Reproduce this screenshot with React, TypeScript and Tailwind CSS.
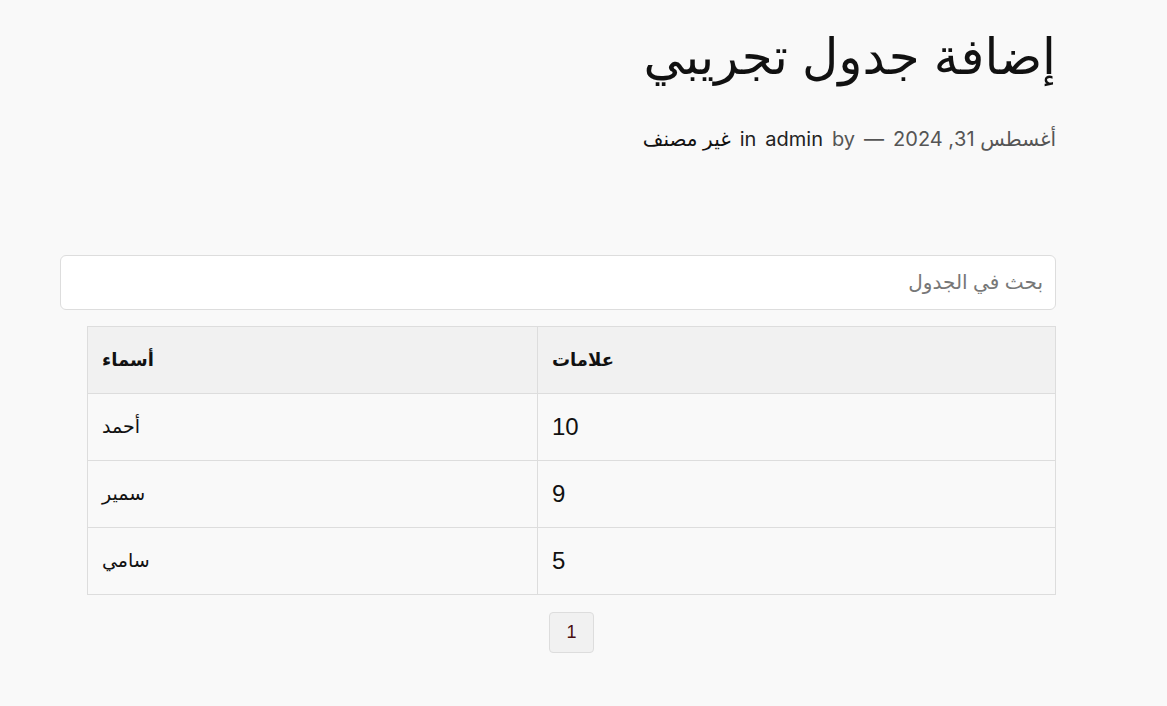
import React from "react";

const rows = [
  { name: "أحمد", mark: "10" },
  { name: "سمير", mark: "9" },
  { name: "سامي", mark: "5" },
];

export default function App() {
  return (
    <div className="min-h-screen w-full bg-[#f9f9f9] font-['Inter','DejaVu_Sans',sans-serif] text-[#111]">
      <div className="ml-[60px] w-[996px] pt-[20px]">
        <h1 dir="rtl" className="text-[50px] leading-[72px] font-normal text-[#111]">
          إضافة جدول تجريبي
        </h1>
        <div dir="rtl" className="mt-[33px] flex items-center gap-[9px] text-[20px] leading-[28px]">
          <span className="text-[#555]">أغسطس 31, 2024</span>
          <span className="text-[#555]">—</span>
          <span className="text-[#555]">by</span>
          <span className="text-[#222]">admin</span>
          <span className="text-[#222]">in</span>
          <span className="text-[#111]">غير مصنف</span>
        </div>

        <div className="mt-[102px]">
          <input
            dir="rtl"
            placeholder="بحث في الجدول"
            className="h-[55px] w-full rounded-[6px] border border-[#dddddd] bg-white px-[12px] text-[20px] text-[#333] outline-none placeholder:text-[#777] font-['Liberation_Sans','DejaVu_Sans',sans-serif]"
          />
        </div>

        <div className="mt-[16px] flex justify-end">
          <table className="w-[969px] border-collapse font-['Liberation_Sans','DejaVu_Sans',sans-serif]">
            <thead>
              <tr className="h-[67px] bg-[#f1f1f1]">
                <th className="w-[450px] border border-[#dddddd] px-[14px] text-left text-[18px] font-bold">أسماء</th>
                <th className="border border-[#dddddd] px-[14px] text-left text-[18px] font-bold">علامات</th>
              </tr>
            </thead>
            <tbody>
              {rows.map((r) => (
                <tr key={r.name} className="h-[67px] bg-[#f9f9f9]">
                  <td className="border border-[#dddddd] px-[14px] text-left text-[19px]">{r.name}</td>
                  <td className="border border-[#dddddd] px-[14px] text-left text-[24px]">{r.mark}</td>
                </tr>
              ))}
            </tbody>
          </table>
        </div>

        <div className="mt-[17px] flex justify-center pl-[27px]">
          <button className="flex h-[41px] w-[45px] items-center justify-center rounded-[4px] border border-[#dddddd] bg-[#f1f1f1] text-[18px] text-[#4a0f0f] font-['Liberation_Sans',sans-serif]">
            1
          </button>
        </div>
      </div>
    </div>
  );
}
